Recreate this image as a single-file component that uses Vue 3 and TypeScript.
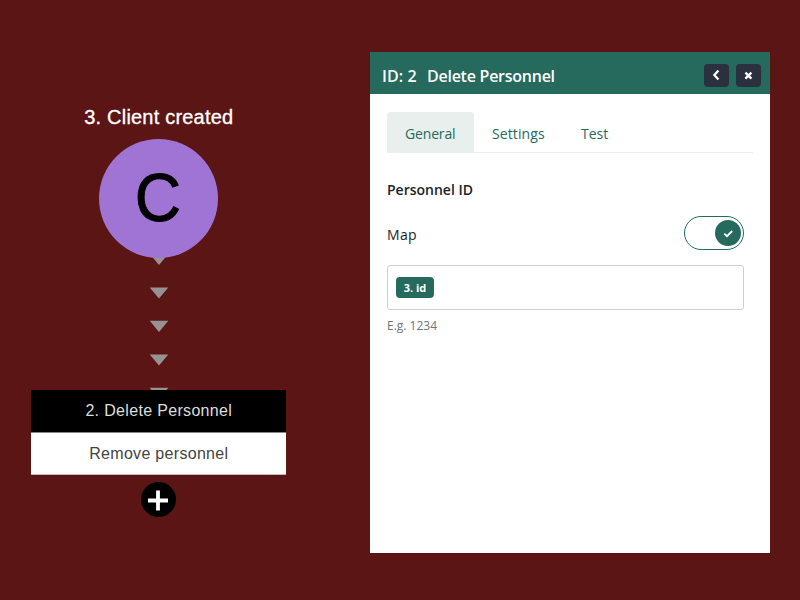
<script setup lang="ts">
import { ref } from 'vue'

const tabs = ['General', 'Settings', 'Test']
const activeTab = ref('General')
const mapped = ref(true)
const arrowTops = [3.8, 37.4, 70.8, 104.4, 137.8]
</script>

<template>
  <main class="screen">
    <section class="flow">
      <h2 class="trigger-title"><span>3. Client created</span></h2>
      <div class="trigger"><span>C</span></div>
      <svg class="connector" width="20" height="140" viewBox="0 0 20 140">
        <path v-for="top in arrowTops" :key="top" :d="`M0.7 ${top}H19.3L10 ${top + 11.2}Z`" />
      </svg>
      <article class="step">
        <div class="step-head"><span>2. Delete Personnel</span></div>
        <div class="step-body"><span>Remove personnel</span></div>
      </article>
      <button class="add" aria-label="Add step">
        <svg width="35" height="35" viewBox="0 0 35 35">
          <path d="M17 8.5V28.5M7 18.5H27" stroke="#fff" stroke-width="3.8" />
        </svg>
      </button>
    </section>

    <section class="panel">
      <header class="panel-head">
        <h1><span class="id">ID: 2</span><span class="name">Delete Personnel</span></h1>
        <button class="tool" aria-label="Back">
          <svg width="25" height="23" viewBox="0 0 25 23">
            <path d="M14.4 6.6L10.4 11L14.4 15.4" />
          </svg>
        </button>
        <button class="tool" aria-label="Close">
          <svg width="25" height="23" viewBox="0 0 25 23">
            <path d="M9.4 8.6L15.4 14.6M15.4 8.6L9.4 14.6" />
          </svg>
        </button>
      </header>
      <div class="panel-body">
        <nav class="tabs">
          <button
            v-for="tab in tabs"
            :key="tab"
            :class="['tab', tab.toLowerCase(), { active: tab === activeTab }]"
            @click="activeTab = tab"
          >{{ tab }}</button>
        </nav>
        <div class="field">
          <h3><span>Personnel ID</span></h3>
          <div class="map-row">
            <span class="map">Map</span>
            <button :class="['toggle', { on: mapped }]" aria-label="Map" @click="mapped = !mapped">
              <span class="knob">
                <svg width="26" height="26" viewBox="0 0 26 26">
                  <path d="M9.3 13.6L12 16.2L17.2 11" />
                </svg>
              </span>
            </button>
          </div>
          <div class="input"><span class="chip"><span>3. id</span></span></div>
          <p class="hint"><span>E.g. 1234</span></p>
        </div>
      </div>
    </section>
  </main>
</template>

<style>
body {
  background: #5c1515;
}
</style>

<style scoped>
* {
  box-sizing: border-box;
}
button {
  border: 0;
  padding: 0;
  margin: 0;
  font: inherit;
}
h1, h2, h3, p {
  margin: 0;
}
svg {
  display: block;
}
.screen {
  width: 800px;
  height: 600px;
  display: flex;
  background: #5c1515;
  overflow: hidden;
  font-family: "Open Sans", "Noto Sans", sans-serif;
  white-space: nowrap;
}
.flow {
  width: 317.6px;
  margin-right: 52.4px;
  padding-top: 105px;
  display: flex;
  flex-direction: column;
  align-items: center;
  font-family: "Liberation Sans", Arial, sans-serif;
  isolation: isolate;
}
.trigger-title {
  height: 33.7px;
  font-size: 20px;
  font-weight: 400;
  line-height: 24px;
  letter-spacing: 0.2px;
  color: #fff;
  -webkit-text-stroke: 0.3px #fff;
}
.trigger {
  width: 119px;
  height: 119px;
  border-radius: 50%;
  background: #a074d4;
  display: flex;
  align-items: center;
  justify-content: center;
  font-size: 69px;
  line-height: 119px;
  color: #000;
}
.trigger span {
  margin: -1px 2px 0 0;
  transform: scaleX(0.93);
  -webkit-text-stroke: 1px #000;
}
.connector {
  margin-top: -7.7px;
  z-index: -1;
  fill: #989392;
}
.step {
  width: 255px;
  height: 85.4px;
  background: #fff;
  border-bottom: 1px solid #c9b8b8;
  font-size: 16px;
}
.step-head,
.step-body {
  display: flex;
  justify-content: center;
  height: 42px;
  line-height: 41px;
}
.step-head {
  height: 43px;
  border-bottom: 1px solid #858585;
  background: #000;
  color: #dedede;
  letter-spacing: 0.33px;
}
.step-body {
  height: 41px;
  color: #444;
  letter-spacing: 0.3px;
}
.add {
  width: 35px;
  height: 35px;
  margin-top: 6.2px;
  border-radius: 50%;
  background: #000;
}
.panel {
  width: 400px;
  height: 500.5px;
  margin-top: 52.3px;
  background: #fff;
}
.panel-head {
  height: 41.4px;
  padding: 5px 9px 0 12px;
  display: flex;
  align-items: center;
  background: #266a5d;
}
h1 {
  flex: 1;
  display: flex;
  gap: 10.2px;
  padding-top: 1px;
  color: #fff;
  font-size: 16px;
  line-height: 22px;
  font-weight: 600;
  letter-spacing: -0.25px;
}
.id {
  letter-spacing: 0.1px;
}
.tool {
  width: 25px;
  height: 23px;
  border-radius: 4px;
  background: #2b303e;
}
.tool + .tool {
  margin-left: 7px;
}
.tool path {
  fill: none;
  stroke: #fff;
  stroke-width: 2.3;
}
.panel-body {
  padding: 18px 17px 0;
}
.tabs {
  display: flex;
  height: 41px;
  border-bottom: 1px solid #e9efed;
}
.tab {
  height: 41px;
  border-radius: 4px 4px 0 0;
  background: transparent;
  color: #266a5d;
  font-size: 14px;
  line-height: 41px;
  padding: 2px 0 0 18px;
  text-align: left;
}
.tab.active {
  background: #e9efed;
}
.general {
  width: 87px;
  line-height: 39px;
  letter-spacing: -0.15px;
}
.tab {
  line-height: 39px;
}
.settings {
  width: 89px;
  letter-spacing: 0.1px;
}
.field {
  width: 357px;
}
h3 {
  margin-top: 26px;
  font-size: 14px;
  line-height: 22px;
  font-weight: 600;
  color: #222329;
}
.map-row {
  margin-top: 15px;
  height: 35px;
  display: flex;
  align-items: center;
  justify-content: space-between;
}
.map {
  padding-top: 3px;
  color: #222329;
  font-size: 14px;
  line-height: 20px;
  letter-spacing: 0.3px;
}
.toggle {
  width: 60px;
  height: 34px;
  border: 1px solid #266a5d;
  border-radius: 17px;
  background: #fff;
  padding: 0 2px;
  display: flex;
  align-items: center;
}
.toggle.on {
  justify-content: flex-end;
}
.knob {
  width: 26px;
  height: 26px;
  border-radius: 50%;
  background: #266a5d;
}
.knob path {
  fill: none;
  stroke: #fff;
  stroke-width: 1.8;
}
.input {
  margin-top: 14px;
  height: 45px;
  border: 1px solid #cfcfcf;
  border-radius: 3px;
  padding-left: 8px;
  display: flex;
  align-items: center;
}
.chip {
  width: 38px;
  height: 21px;
  border-radius: 4px;
  background: #266a5d;
  color: #fff;
  font-size: 11px;
  font-weight: 700;
  line-height: 22px;
  text-align: center;
}
.hint {
  margin-top: 7px;
  color: #6c737d;
  font-size: 12px;
  line-height: 18px;
}
</style>
